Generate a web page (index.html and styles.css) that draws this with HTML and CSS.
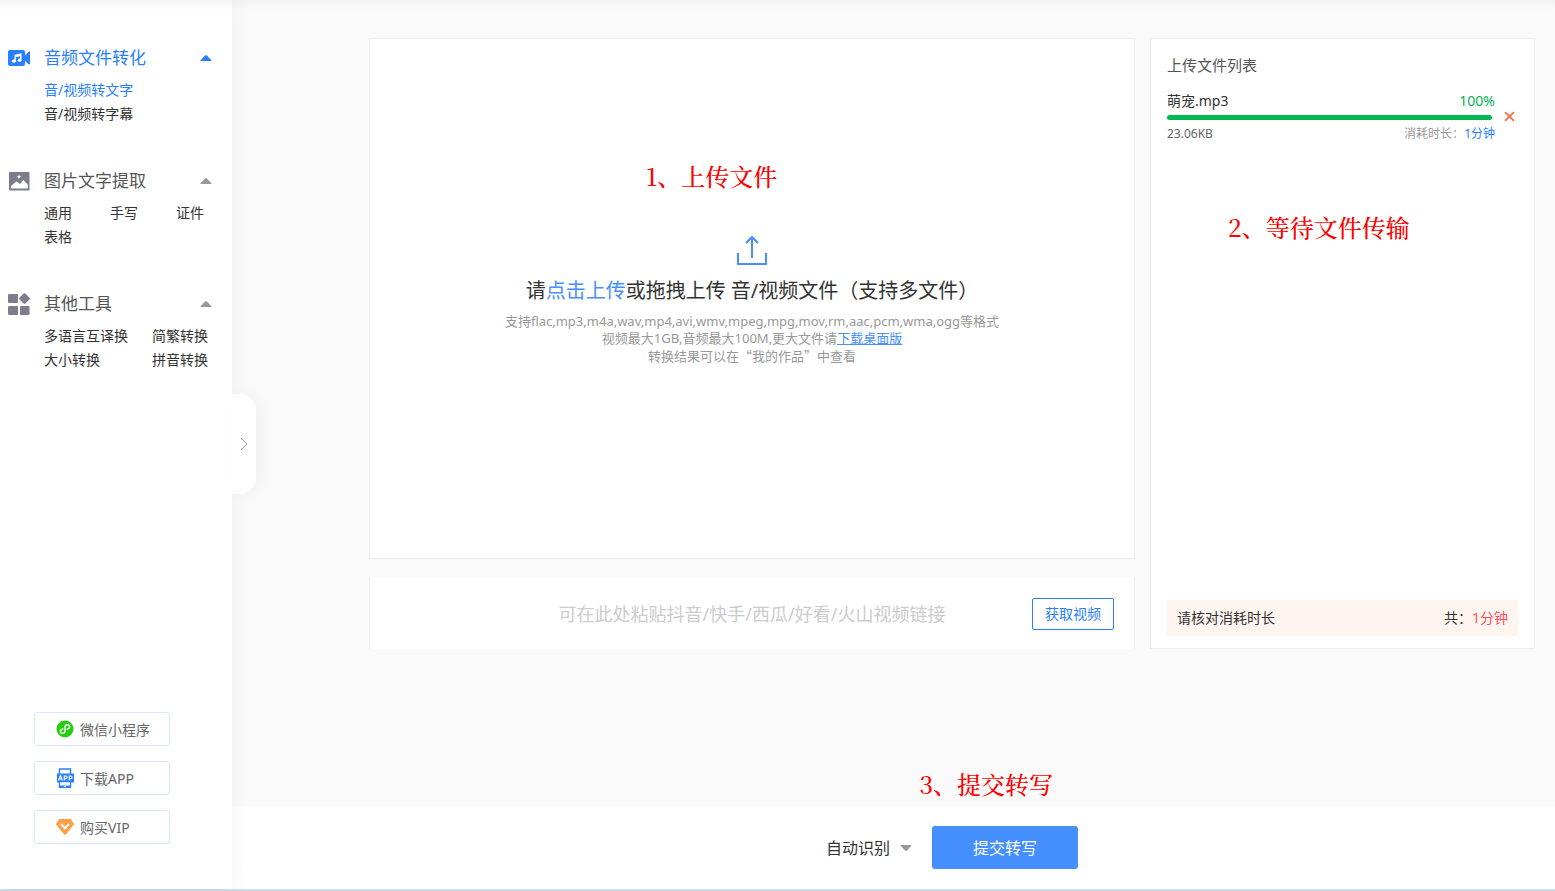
FILE: index.html
```html
<!DOCTYPE html>
<html lang="zh-CN">
<head>
<meta charset="utf-8">
<meta name="viewport" content="width=device-width, initial-scale=1">
<title>音/视频转文字</title>
<link rel="stylesheet" href="styles.css">
</head>
<body>
<div class="app">
  <aside class="sidebar">
    <nav class="nav">
      <section class="group">
        <h2 class="group-title active">
          <svg class="group-icon" viewBox="0 0 22 22"><path fill="#2a7fff" d="M2 3h13a2 2 0 0 1 2 2v3.500l3.500-3.700Q22 4 22 5.500v11q0 1.500-1.500.700L17 14v3a2 2 0 0 1-2 2H2a2 2 0 0 1-2-2V5a2 2 0 0 1 2-2z"/><path fill="none" stroke="#fff" stroke-width="1.400" d="M7.200 14V8.300l5.600-1.200v5.700M7.200 9.500l5.600-1.200"/><ellipse cx="5.800" cy="14.200" rx="1.900" ry="1.600" fill="#fff"/><ellipse cx="11.500" cy="13.200" rx="1.900" ry="1.600" fill="#fff"/></svg>
          <span>音频文件转化</span>
          <svg class="caret" viewBox="0 0 12 6"><path fill="currentColor" d="M1 6Q0 6 .8 5L5 .6Q6-.3 7 .6L11.200 5Q12 6 11 6z"/></svg>
        </h2>
        <div class="links">
          <a class="active" href="#">音/视频转文字</a>
          <a href="#">音/视频转字幕</a>
        </div>
      </section>
      <section class="group">
        <h2 class="group-title">
          <svg class="group-icon" viewBox="0 0 22 22"><path fill="#7d7d8b" fill-rule="evenodd" d="M2 2h18.500a1 1 0 0 1 1 1v16.500a1 1 0 0 1-1 1H2a1 1 0 0 1-1-1V3a1 1 0 0 1 1-1zM3 18.500h17V15l-4.500-5-3.500 4-2-1.500-1.700-1L3 16z"/><path fill="#fff" d="M11 4.500l.7 1.500 1.500.7-1.500.8-.7 1.500-.7-1.500-1.500-.8 1.500-.7z"/></svg>
          <span>图片文字提取</span>
          <svg class="caret" viewBox="0 0 12 6"><path fill="currentColor" d="M1 6Q0 6 .8 5L5 .6Q6-.3 7 .6L11.200 5Q12 6 11 6z"/></svg>
        </h2>
        <div class="links three">
          <a href="#">通用</a><a href="#">手写</a><a href="#">证件</a><a href="#">表格</a>
        </div>
      </section>
      <section class="group">
        <h2 class="group-title">
          <svg class="group-icon" viewBox="0 0 22 22"><g fill="#7d7d8b"><rect y="1" width="10" height="9" rx="1"/><rect y="13" width="10" height="9" rx="1"/><rect x="12" y="13" width="9.500" height="9" rx="1"/><path d="M15.600.6q.9-.9 1.800 0l4.100 4.100q.9.900 0 1.800l-4.100 4.100q-.9.900-1.800 0l-4.100-4.100q-.9-.9 0-1.800z"/></g></svg>
          <span>其他工具</span>
          <svg class="caret" viewBox="0 0 12 6"><path fill="currentColor" d="M1 6Q0 6 .8 5L5 .6Q6-.3 7 .6L11.200 5Q12 6 11 6z"/></svg>
        </h2>
        <div class="links two">
          <a href="#">多语言互译换</a><a href="#">简繁转换</a><a href="#">大小转换</a><a href="#">拼音转换</a>
        </div>
      </section>
    </nav>
    <div class="promo">
      <a href="#"><svg viewBox="0 0 20 20"><circle cx="10" cy="10" r="8.500" fill="#24ce0f"/><path fill="none" stroke="#fff" stroke-width="1.400" stroke-linecap="round" d="M7.800 10c-3.200.6-3.200 4.200-.3 4.200 1.500 0 2.500-1 2.500-2.200V8c0-1.200 1-2.200 2.500-2.200 2.900 0 2.900 3.600-.3 4.200"/></svg>微信小程序</a>
      <a href="#"><svg viewBox="0 0 20 20"><path fill="none" stroke="#2a7fff" stroke-width="1.400" d="M4.500 6V1h11v5M4.500 14v5h11v-5"/><path fill="#2a7fff" d="M2 5.500h17v9H2zM4 17.500h12V20H4z"/><path fill="#fff" d="M5 14.500h10V17H5zM9 18h2v1H9z"/><path fill="none" stroke="#fff" stroke-width="1.100" d="M3.500 12.500l2-5 2 5M4.200 11h2.600M9.300 12.500V8h1.500q1.300 0 1.300 1.300T10.800 10.700H9.300M14.300 12.500V8h1.500q1.300 0 1.300 1.300t-1.300 1.400h-1.500"/></svg>下载APP</a>
      <a href="#"><svg viewBox="0 0 20 20"><path fill="#ff9f45" d="M5 2h10q.8 0 1.300.6l2.400 3.800q.5.800 0 1.400L11 17.300q-1 1-2 0L1.300 7.800q-.5-.6 0-1.400l2.400-3.800Q4.200 2 5 2z"/><path fill="none" stroke="#fff" stroke-width="2" d="M6 7l4 4.300L14 7"/></svg>购买VIP</a>
    </div>
    <button class="drawer" type="button" aria-label="展开"><svg viewBox="0 0 8 14"><path fill="none" stroke="#999" d="M1 1l6 6-6 6"/></svg></button>
  </aside>

  <main class="main">
    <div class="workspace">
      <div class="left">
        <section class="upload">
          <p class="note note-upload">1、上传文件</p>
          <svg class="upload-icon" viewBox="0 0 32 32"><path fill="none" stroke="#468fff" stroke-width="2" d="M2 19v11h28V19M16 24V3M10 9l6-6 6 6"/></svg>
          <p class="upload-title">请<a href="#">点击上传</a>或拖拽上传 音/视频文件（支持多文件）</p>
          <p class="hint">支持flac,mp3,m4a,wav,mp4,avi,wmv,mpeg,mpg,mov,rm,aac,pcm,wma,ogg等格式<br>视频最大1GB,音频最大100M,更大文件请<a href="#">下载桌面版</a><br><span class="cjk">转换结果可以在“我的作品”中查看</span></p>
        </section>
        <form class="fetch">
          <input type="text" aria-label="视频链接" placeholder="可在此处粘贴抖音/快手/西瓜/好看/火山视频链接">
          <button type="button">获取视频</button>
        </form>
      </div>
      <section class="files">
        <h1>上传文件列表</h1>
        <div class="file">
          <div class="file-info">
            <div class="row name"><span>萌宠.mp3</span><span class="percent">100%</span></div>
            <div class="track"><div class="fill"></div></div>
            <div class="row meta"><span>23.06KB</span><span class="cost">消耗时长：<b>1分钟</b></span></div>
          </div>
          <button class="remove" type="button" aria-label="删除"><svg viewBox="0 0 10 10"><path stroke="#ff6a3c" stroke-width="1.600" d="M1 1l8 8M9 1L1 9"/></svg></button>
        </div>
        <p class="note note-wait">2、等待文件传输</p>
        <div class="total"><span>请核对消耗时长</span><span>共：<b>1分钟</b></span></div>
      </section>
    </div>
    <footer class="submit-bar">
      <p class="note note-submit">3、提交转写</p>
      <label class="language"><select aria-label="识别语言"><option>自动识别</option></select><svg class="caret" viewBox="0 0 12 6"><path fill="currentColor" d="M1 0Q0 0 .8 1L5 5.400q1 .9 2 0L11.200 1Q12 0 11 0z"/></svg></label>
      <button class="submit" type="button">提交转写</button>
    </footer>
  </main>
</div>
</body>
</html>
```
FILE: styles.css
```css
* { box-sizing: border-box; }
body, h1, h2, p { margin: 0; }
body {
  font-family: "Noto Sans", "Noto Sans CJK SC", sans-serif;
  font-size: 14px;
  font-weight: 400;
  color: #333;
  background: #fafafa;
}
h1, h2, b { font-weight: inherit; }
button, input, select { font: inherit; }
button { cursor: pointer; }
a { color: inherit; text-decoration: none; }
svg { display: block; flex: none; }

.app {
  display: flex;
  min-height: 100vh;
  border-bottom: 2px solid #ccdaf0;
  background: linear-gradient(#f2f2f2, #fafafa 10px);
}

.sidebar {
  position: relative;
  z-index: 1;
  display: flex;
  flex-direction: column;
  flex: none;
  width: 232px;
  padding: 40px 0 45px;
  background: linear-gradient(#f5f5f5, #fff 10px);
  box-shadow: 0 0 20px rgba(0, 0, 0, .06);
}
.group { min-height: 123px; }
.group-title {
  display: flex;
  align-items: center;
  height: 36px;
  margin-bottom: 2px;
  padding: 0 20px 0 8px;
  font-size: 17px;
  line-height: 26px;
  color: #555;
}
.group-icon { width: 22px; height: 22px; margin-right: 14px; }
.caret { width: 12px; height: 6px; color: #999; }
.group-title .caret { margin-left: auto; }
.active, .active .caret { color: #2a7fff; }
.links { display: grid; padding-left: 44px; line-height: 24px; white-space: nowrap; }
.three { grid-template-columns: repeat(3, 66px); }
.two { grid-template-columns: 108px 1fr; }

.promo { display: flex; flex-direction: column; gap: 15px; margin: auto 62px 0 34px; }
.promo a {
  display: flex;
  align-items: center;
  gap: 5px;
  height: 34px;
  padding-left: 20px;
  border: 1px solid #d8e7ff;
  border-radius: 3px;
  color: #666;
}
.promo svg { width: 20px; height: 20px; }

.drawer {
  position: absolute;
  left: 100%;
  top: 394px;
  display: flex;
  align-items: center;
  justify-content: center;
  width: 24px;
  height: 100px;
  padding: 0;
  border: 0;
  border-radius: 0 16px 16px 0;
  background: #fff;
  box-shadow: 6px 0 14px rgba(0, 0, 0, .04);
}
.drawer svg { width: 8px; height: 14px; }

.main { display: flex; flex-direction: column; flex: 1; min-width: 0; }
.workspace { display: flex; gap: 15px; padding: 38px 20px 0 137px; }
.left { display: flex; flex-direction: column; gap: 19px; flex: 1; min-width: 0; }
.upload {
  position: relative;
  display: flex;
  flex-direction: column;
  align-items: center;
  min-height: 521px;
  padding-top: 195px;
  border: 1px solid #eee;
  background: #fff;
  text-align: center;
}
.upload-icon { width: 32px; height: 32px; }
.upload-title { margin-top: 9px; font-size: 20px; line-height: 32px; }
.upload-title a, .hint a { color: #468fff; }
.hint { margin-top: 6px; font-size: 13px; line-height: 17px; color: #999; }
.hint a { text-decoration: underline; }
.cjk { font-family: "Noto Sans CJK SC", sans-serif; }

.fetch {
  position: relative;
  display: flex;
  align-items: center;
  justify-content: flex-end;
  height: 71px;
  padding: 0 20px;
  border: solid #eee;
  border-width: 0 1px;
  background: #fff;
}
.fetch input {
  flex: 1;
  min-width: 0;
  padding: 0 0 0 82px;
  border: 0;
  outline: 0;
  background: none;
  font-size: 18px;
  text-align: center;
}
.fetch input::placeholder { color: #ccc; }
.fetch button {
  height: 32px;
  padding: 0 12px 2px;
  border: 1px solid #2a7fff;
  border-radius: 2px;
  background: #fff;
  color: #2a7fff;
}

.files {
  position: relative;
  display: flex;
  flex-direction: column;
  flex: none;
  width: 385px;
  padding: 15px 16px 12px;
  border: 1px solid #eee;
  background: #fff;
}
.files h1 { font-size: 15px; line-height: 22px; color: #555; }
.file { display: flex; align-items: center; gap: 7px; margin-top: 15px; padding-right: 1px; }
.file-info { flex: 1; }
.row { display: flex; justify-content: space-between; }
.name { line-height: 20px; padding-bottom: 4px; }
.percent { color: #00b451; }
.track { padding-right: 3px; }
.fill { height: 5px; border-radius: 3px; background: #00b955; }
.meta { font-size: 12px; line-height: 16px; padding-top: 6px; color: #666; }
.cost { color: #999; }
.cost b { color: #2a7fff; }
.remove { width: 15px; padding: 0 2px; border: 0; background: none; }
.total {
  display: flex;
  align-items: center;
  justify-content: space-between;
  height: 36px;
  margin-top: auto;
  padding: 0 10px 2px;
  background: #fff5ef;
}
.total b { color: #ff4d5e; }

.submit-bar {
  position: relative;
  display: flex;
  align-items: center;
  justify-content: center;
  gap: 20px;
  height: 83px;
  margin-top: auto;
  padding: 0 20px 0 137px;
  background: #fff;
}
.language { display: flex; align-items: center; gap: 10px; font-size: 16px; }
.language select { width: 64px; padding: 0; border: 0; appearance: none; background: none; color: #333; }
.submit {
  width: 146px;
  height: 43px;
  padding: 0 0 2px;
  border: 0;
  border-radius: 3px;
  background: #468fff;
  color: #fff;
  font-size: 16px;
}

/* Step captions laid over the panels */
.note {
  position: absolute;
  font-family: "Noto Serif CJK SC", "Noto Sans CJK SC", serif;
  font-size: 24px;
  font-weight: 500;
  line-height: 32px;
  white-space: nowrap;
  color: #f00;
}
.note-upload { top: 121px; left: calc(50% - 106px); }
.note-wait { top: 172px; left: 77px; }
.note-submit { top: -38px; left: calc(50% + 26px); }
```
